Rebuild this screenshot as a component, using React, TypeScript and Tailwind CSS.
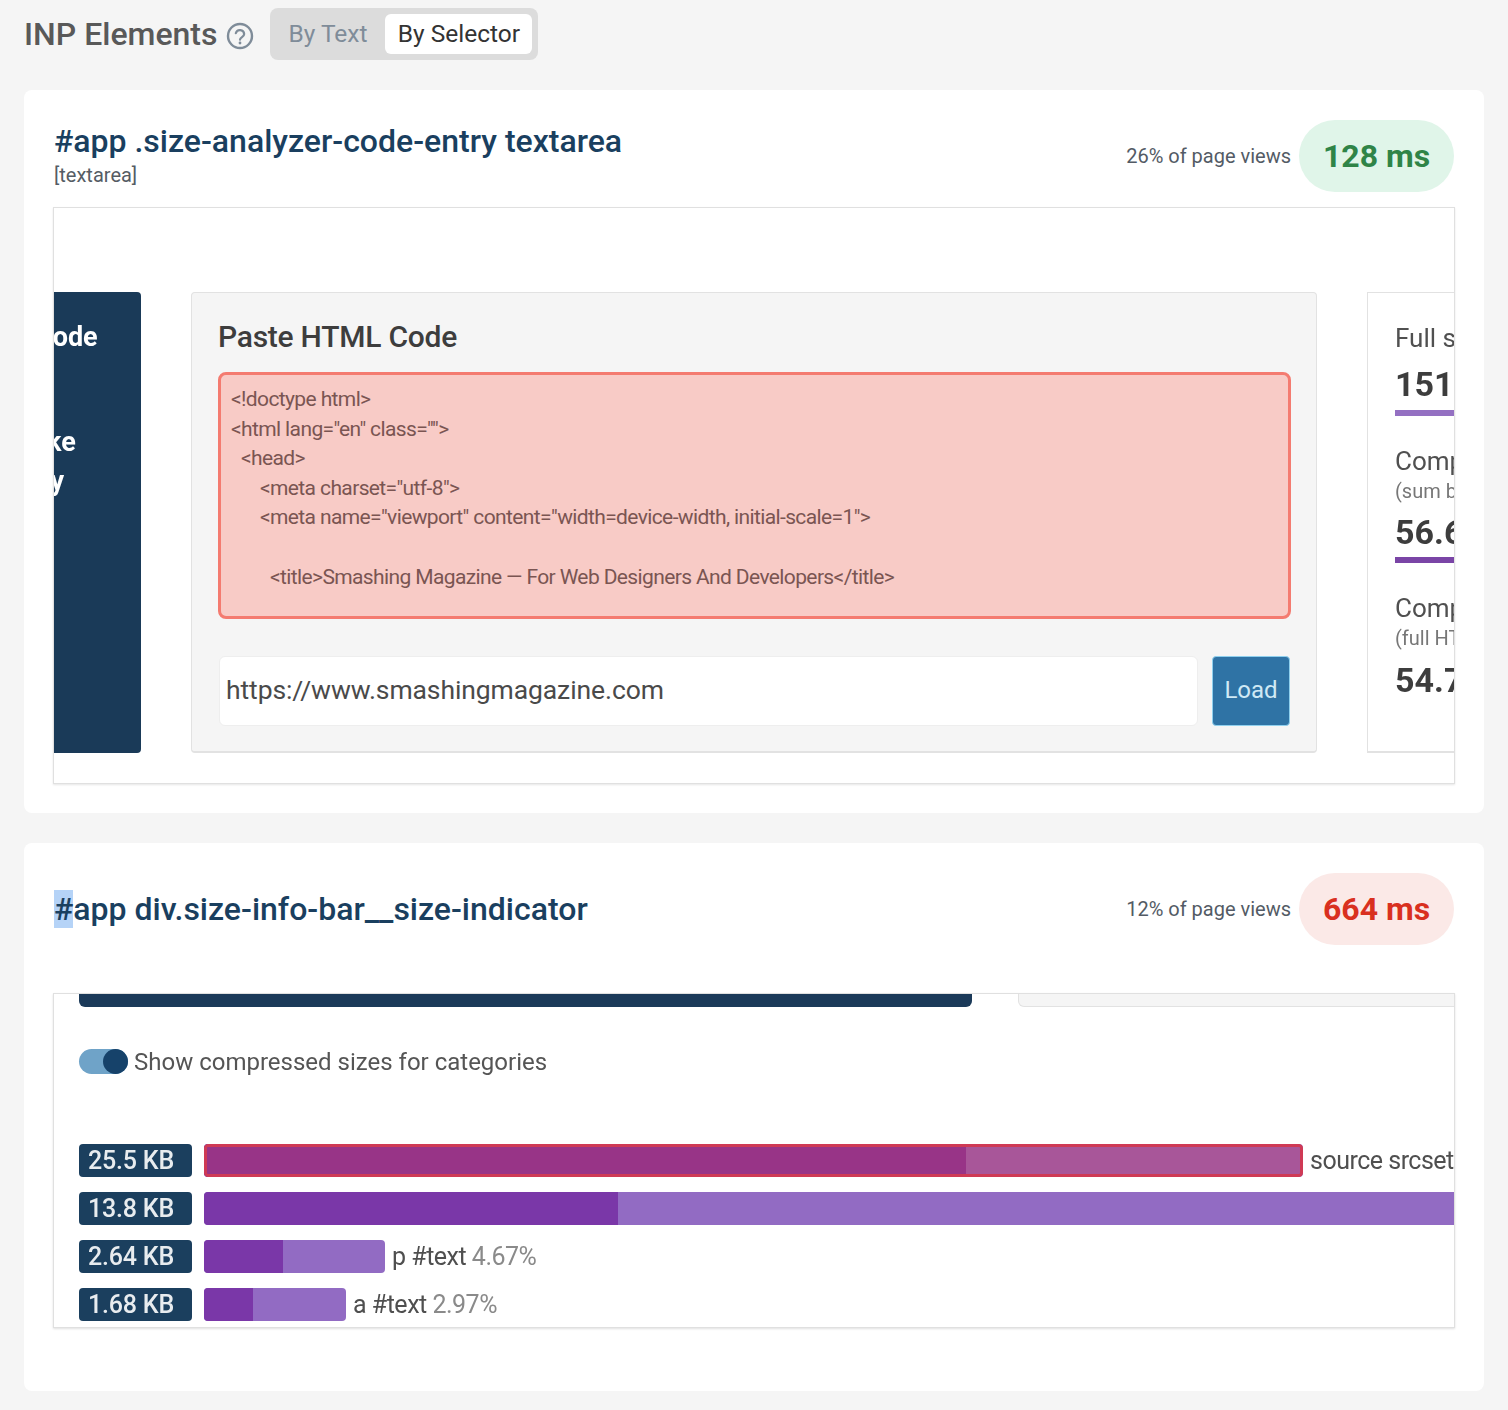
const codeLines = [
  { text: '<!doctype html>', indent: 'pl-0' },
  { text: '<html lang="en" class="">', indent: 'pl-0' },
  { text: '<head>', indent: 'pl-[10px]' },
  { text: '<meta charset="utf-8">', indent: 'pl-[29px]' },
  { text: '<meta name="viewport" content="width=device-width, initial-scale=1">', indent: 'pl-[29px]' },
  { text: '\u00a0', indent: 'pl-0' },
  { text: '<title>Smashing Magazine — For Web Designers And Developers</title>', indent: 'pl-[39px]' },
]

const sizeRows = [
  { size: '25.5 KB', barClass: 'w-[1099px]', darkClass: 'w-[762px]', outlined: true, label: 'source srcset', pct: '' },
  { size: '13.8 KB', barClass: 'w-[1300px]', darkClass: 'w-[414px]', outlined: false, label: '', pct: '' },
  { size: '2.64 KB', barClass: 'w-[181px]', darkClass: 'w-[79px]', outlined: false, label: 'p #text', pct: '4.67%' },
  { size: '1.68 KB', barClass: 'w-[142px]', darkClass: 'w-[49px]', outlined: false, label: 'a #text', pct: '2.97%' },
]

function HelpIcon() {
  return (
    <svg width="28" height="28" viewBox="0 0 28 28" fill="none" className="mt-[3px] shrink-0">
      <circle cx="14" cy="14" r="12" stroke="#7f8c99" strokeWidth="2.4" />
      <path d="M9.8 11.2a4.3 4.3 0 0 1 8.4 .9c0 2.8-4.2 3.1-4.2 5.6" stroke="#7f8c99" strokeWidth="2.2" strokeLinecap="round" />
      <circle cx="14" cy="21" r="1.4" fill="#7f8c99" />
    </svg>
  )
}

function CardHeader({ title, first, sub, views, value, pillClass }: { title: string; first?: string; sub?: string; views: string; value: string; pillClass: string }) {
  return (
    <div className="flex items-center justify-between h-[72px]">
      <div>
        <h2 className="text-[32px] leading-[38px] font-medium text-[#1a3f5f]">
          {first && <span className="bg-[#b5d3f7]">{first}</span>}
          {title}
        </h2>
        {sub && <div className="text-[20px] leading-[26px] text-[#555c64] mt-[2px] mb-[2px]">{sub}</div>}
      </div>
      <div className="flex items-center gap-[8px]">
        <span className="text-[20px] text-[#535b65]">{views}</span>
        <span className={`w-[155px] h-[72px] rounded-full flex items-center justify-center text-[32px] font-bold ${pillClass}`}>{value}</span>
      </div>
    </div>
  )
}

function PastePanel() {
  return (
    <div className="w-[1126px] h-[461px] shrink-0 ml-[50px] bg-[#f5f5f5] rounded-[4px] border border-[#e2e2e2] border-b-2 pt-[22px] px-[26px]">
      <h3 className="text-[30px] leading-[44px] font-medium text-[#3d3d3d] tracking-[-0.25px]">Paste HTML Code</h3>
      <div className="mt-[13px] h-[247px] w-[1073px] rounded-[8px] border-[3px] border-[#f47b70] bg-[#f8cbc6] pl-[10px] pt-[10px] text-[21px] leading-[29.6px] text-[#7a5552] tracking-[-0.62px]">
        {codeLines.map((line) => (
          <div key={line.text + line.indent} className={`whitespace-nowrap ${line.indent}`}>{line.text}</div>
        ))}
      </div>
      <div className="flex mt-[37px] ml-px gap-[14px] items-stretch h-[70px]">
        <div className="w-[980px] bg-white rounded-[6px] border border-[#eeeeee] flex items-center pl-[6px] pb-[2px] text-[26.5px] tracking-[-0.1px] text-[#4a4a4a]">
          https://www.smashingmagazine.com
        </div>
        <button className="w-[78px] bg-[#2f73a5] rounded-[4px] border border-[#8fd0ee] text-[#cfe9f5] text-[24px] pb-[2px]">Load</button>
      </div>
    </div>
  )
}

function StatsPanel() {
  return (
    <div className="w-[120px] h-[461px] shrink-0 ml-[50px] border border-[#e2e2e2] border-r-0 border-b-2 pl-[27px] pt-[27px] text-[#3d3d3d] overflow-hidden whitespace-nowrap">
      <div className="text-[26px] leading-[36px] text-[#505050]">Full size</div>
      <div className="text-[34px] leading-[40px] font-bold mt-[8px]">151 KB</div>
      <div className="h-[6px] w-[90px] bg-[#9470c2] mt-[6px]" />
      <div className="text-[26px] leading-[36px] text-[#505050] mt-[27px]">Compressed</div>
      <div className="text-[20px] leading-[24px] text-[#777777]">(sum by type)</div>
      <div className="text-[34px] leading-[40px] font-bold mt-[9px]">56.6 KB</div>
      <div className="h-[6px] w-[90px] bg-[#7a45a6] mt-[5px]" />
      <div className="text-[26px] leading-[36px] text-[#505050] mt-[27px]">Compressed</div>
      <div className="text-[20px] leading-[24px] text-[#777777]">(full HTML)</div>
      <div className="text-[34px] leading-[40px] font-bold mt-[10px]">54.7 KB</div>
    </div>
  )
}

function SizeRow({ row }: { row: (typeof sizeRows)[number] }) {
  return (
    <div className="flex items-center h-[33px]">
      <div className="w-[113px] h-[33px] shrink-0 rounded-[4px] bg-[#1b3f5e] text-white/90 text-[25px] font-medium flex items-center pl-[9px] tracking-[-0.2px]">{row.size}</div>
      <div className={`relative ml-[12px] h-[33px] shrink-0 rounded-[4px] overflow-hidden bg-[#926bc3] ${row.barClass}`}>
        <div className={`h-full bg-[#7a37a8] ${row.darkClass}`} />
        {row.outlined && <div className="absolute inset-0 rounded-[4px] border-[3px] border-[#cf3a55] bg-[#d0304a]/35" />}
      </div>
      <span className="ml-[7px] text-[25px] text-[#4f4f4f] whitespace-nowrap tracking-[-0.5px]">
        {row.label} <span className="text-[#8a8a8a]">{row.pct}</span>
      </span>
    </div>
  )
}

export default function App() {
  return (
    <div className="min-h-[1410px] bg-[#f5f5f5] px-[24px] pt-[8px] font-['Roboto',sans-serif]">
      <div className="flex items-center h-[52px]">
        <h1 className="text-[32px] pb-[1px] font-medium text-[#595959]">INP Elements</h1>
        <span className="ml-[9px]"><HelpIcon /></span>
        <div className="ml-[16px] h-[52px] w-[268px] rounded-[8px] bg-[#dcdcdc] flex items-center pl-[6px] pr-[6px] justify-between">
          <span className="w-[103px] text-center text-[24.5px] text-[#7f8c99]">By Text</span>
          <span className="w-[147px] h-[40px] rounded-[6px] bg-white flex items-center justify-center text-[24.5px] text-[#333333]">By Selector</span>
        </div>
      </div>

      <section className="mt-[30px] h-[723px] rounded-[8px] bg-white pt-[30px] px-[30px]">
        <CardHeader title="#app .size-analyzer-code-entry textarea" sub="[textarea]" views="26% of page views" value="128 ms" pillClass="bg-[#e0f5e9] text-[#2f8447]" />
        <div className="mt-[15px] -mx-px h-[577px] bg-white border border-[#e0e0e0] shadow-[0_1px_2px_rgba(0,0,0,0.1)] overflow-hidden flex items-start pt-[84px] blur-[0.4px]">
          <div className="w-[87px] h-[461px] shrink-0 bg-[#1a3a58] rounded-r-[4px] overflow-hidden text-white font-bold text-[27px] whitespace-nowrap">
            <div className="-ml-[19px] mt-[27px] leading-[36px]">Code</div>
            <div className="-ml-[45px] mt-[69px] leading-[36px]">Make</div>
            <div className="-ml-[41px] mt-[3px] leading-[36px]">Way</div>
          </div>
          <PastePanel />
          <StatsPanel />
        </div>
      </section>

      <section className="mt-[30px] h-[548px] rounded-[8px] bg-white pt-[30px] px-[30px]">
        <CardHeader first="#" title="app div.size-info-bar__size-indicator" views="12% of page views" value="664 ms" pillClass="bg-[#fbe9e7] text-[#d9301f]" />
        <div className="mt-[48px] -mx-px h-[335px] bg-white border border-[#e0e0e0] shadow-[0_1px_2px_rgba(0,0,0,0.12)] overflow-hidden pl-[25px] blur-[0.4px]">
          <div className="flex h-[13px]">
            <div className="w-[893px] shrink-0 rounded-b-[6px] bg-[#1b3a59]" />
            <div className="ml-[46px] w-[460px] shrink-0 rounded-bl-[6px] bg-[#f5f5f5] border border-t-0 border-[#e2e2e2]" />
          </div>
          <div className="flex items-center mt-[42px] h-[25px]">
            <div className="relative w-[49px] h-[25px] rounded-full bg-[#6fa3c8]">
              <div className="absolute right-0 top-0 w-[25px] h-[25px] rounded-full bg-[#16426a]" />
            </div>
            <span className="ml-[6px] pt-[1px] text-[24px] text-[#555555] whitespace-nowrap">Show compressed sizes for categories</span>
          </div>
          <div className="mt-[70px] flex flex-col gap-[15px]">
            {sizeRows.map((row) => (
              <SizeRow key={row.size} row={row} />
            ))}
          </div>
        </div>
      </section>
    </div>
  )
}
